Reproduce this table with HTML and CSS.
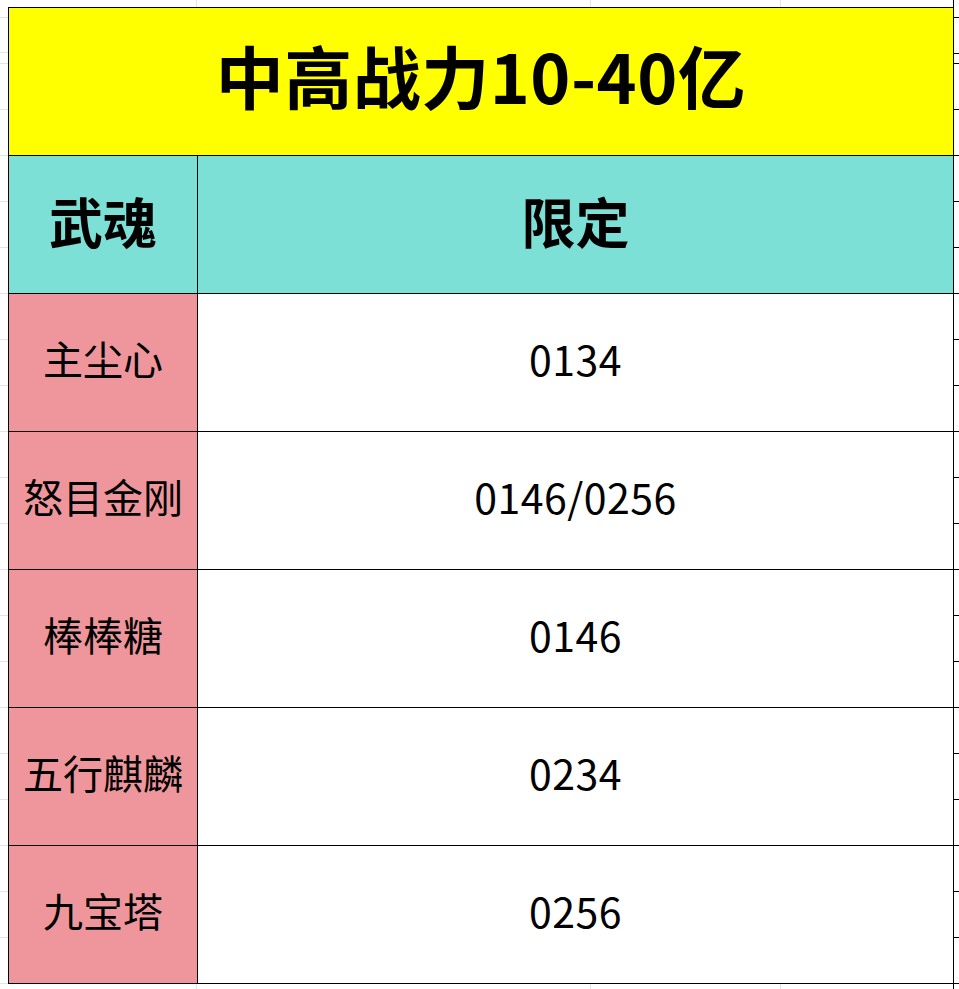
FILE: index.html
```html
<!DOCTYPE html>
<html lang="zh">
<head>
<meta charset="utf-8">
<title>中高战力10-40亿</title>
<link rel="stylesheet" href="styles.css">
</head>
<body>
<div class="sheet">
  <div class="table">
    <div class="cell title">中高战力10-40亿</div>
    <div class="cell head">武魂</div>
    <div class="cell head">限定</div>
    <div class="cell name">主尘心</div>
    <div class="cell val">0134</div>
    <div class="cell name">怒目金刚</div>
    <div class="cell val">0146/0256</div>
    <div class="cell name">棒棒糖</div>
    <div class="cell val">0146</div>
    <div class="cell name">五行麒麟</div>
    <div class="cell val">0234</div>
    <div class="cell name">九宝塔</div>
    <div class="cell val">0256</div>
  </div>
</div>
</body>
</html>
```

FILE: styles.css
```css
html, body {
  margin: 0;
  padding: 0;
}

body {
  width: 959px;
  height: 989px;
  overflow: hidden;
  font-family: "Noto Sans CJK SC", "Noto Sans", sans-serif;
  color: #000;
  background-color: #ffffff;
  background-image:
    linear-gradient(#000, #000),
    linear-gradient(to bottom, transparent 0 53px, #000 53px 54px, transparent 54px),
    repeating-linear-gradient(to bottom, #000 0 1px, transparent 1px 46px),
    linear-gradient(to bottom, transparent 0 52px, #e4e4e4 52px 53px, transparent 53px),
    repeating-linear-gradient(to bottom, #e4e4e4 0 1px, transparent 1px 46px),
    linear-gradient(to right, transparent 0 196px, #e4e4e4 196px 197px, transparent 197px 590px, #e4e4e4 590px 591px, transparent 591px 780px, #e4e4e4 780px 781px, transparent 781px);
  background-repeat: no-repeat, no-repeat, repeat-y, no-repeat, repeat-y, no-repeat;
  background-size: 1px 100%, 6px 100%, 6px 46px, 8px 100%, 8px 46px, 100% 100%;
  background-position: 953px 0, 953px 0, 953px 155px, 0 0, 0 155px, 0 0;
}

.sheet {
  padding: 7px 0 0 8px;
}

.table {
  display: grid;
  grid-template-columns: 189px 756px;
  grid-template-rows: 148px repeat(6, 138px);
  border-left: 1px solid #000;
  border-top: 1px solid #000;
  width: 945px;
}

.cell {
  box-sizing: border-box;
  border-right: 1px solid #000;
  border-bottom: 1px solid #000;
  display: flex;
  align-items: center;
  justify-content: center;
  white-space: nowrap;
}

.title {
  grid-column: 1 / 3;
  background: #ffff00;
  font-size: 68px;
  font-weight: 700;
  padding-bottom: 14px;
  letter-spacing: 0.5px;
}

.head {
  background: #7de0d6;
  font-size: 54px;
  font-weight: 700;
  padding-bottom: 8px;
}

.name {
  background: #ee969b;
  font-size: 40px;
  font-weight: 400;
  padding-bottom: 10px;
}

.val {
  background: #ffffff;
  font-size: 41px;
  font-weight: 400;
  padding-bottom: 10px;
  letter-spacing: 0.5px;
}
```
